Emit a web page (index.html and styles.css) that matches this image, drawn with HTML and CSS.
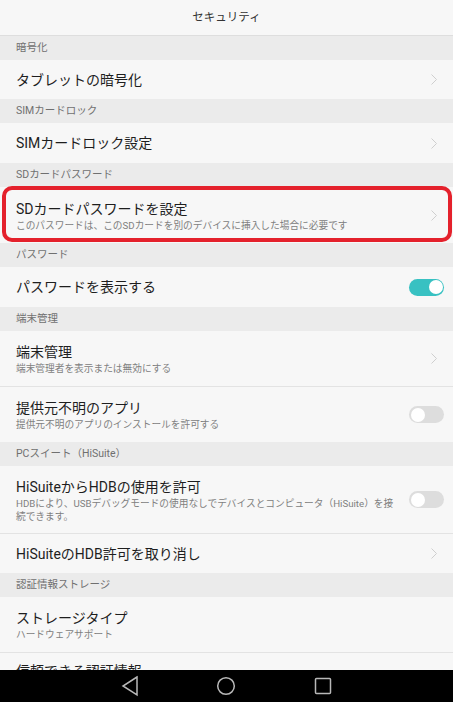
FILE: index.html
```html
<html>
<head>
    <meta charset="utf-8">
    <meta name="viewport" content="width=device-width,initial-scale=1">
    <title>セキュリティ</title>
    <link rel="stylesheet" href="styles.css">
</head>
<body>
<div class="screen">
    <div class="titlebar">セキュリティ</div>

    <div class="content">
        <div class="section">暗号化</div>
        <div class="item h40 first">
            <div class="text"><div class="title">タブレットの暗号化</div></div>
            <div class="trail"><svg class="chev" width="6" height="11" viewBox="0 0 6 11"><polyline points="0.5,0.5 5.5,5.5 0.5,10.5"/></svg></div>
        </div>

        <div class="section">SIMカードロック</div>
        <div class="item h40">
            <div class="text"><div class="title">SIMカードロック設定</div></div>
            <div class="trail"><svg class="chev" width="6" height="11" viewBox="0 0 6 11"><polyline points="0.5,0.5 5.5,5.5 0.5,10.5"/></svg></div>
        </div>

        <div class="section">SDカードパスワード</div>
        <div class="item h56 marked">
            <div class="text">
                <div class="title">SDカードパスワードを設定</div>
                <div class="sub">このパスワードは、このSDカードを別のデバイスに挿入した場合に必要です</div>
            </div>
            <div class="trail"><svg class="chev" width="6" height="11" viewBox="0 0 6 11"><polyline points="0.5,0.5 5.5,5.5 0.5,10.5"/></svg></div>
            <span class="highlight"></span>
        </div>

        <div class="section">パスワード</div>
        <div class="item h40">
            <div class="text"><div class="title">パスワードを表示する</div></div>
            <div class="trail"><span class="switch on"><span class="knob"></span></span></div>
        </div>

        <div class="section">端末管理</div>
        <div class="item h55">
            <div class="text">
                <div class="title">端末管理</div>
                <div class="sub">端末管理者を表示または無効にする</div>
            </div>
            <div class="trail"><svg class="chev" width="6" height="11" viewBox="0 0 6 11"><polyline points="0.5,0.5 5.5,5.5 0.5,10.5"/></svg></div>
        </div>
        <div class="item h56 divided">
            <div class="text">
                <div class="title">提供元不明のアプリ</div>
                <div class="sub">提供元不明のアプリのインストールを許可する</div>
            </div>
            <div class="trail"><span class="switch"><span class="knob"></span></span></div>
        </div>

        <div class="section">PCスイート（HiSuite）</div>
        <div class="item h67">
            <div class="text">
                <div class="title">HiSuiteからHDBの使用を許可</div>
                <div class="sub">HDBにより、USBデバッグモードの使用なしでデバイスとコンピュータ（HiSuite）を接続できます。</div>
            </div>
            <div class="trail"><span class="switch"><span class="knob"></span></span></div>
        </div>
        <div class="item h40 divided">
            <div class="text"><div class="title">HiSuiteのHDB許可を取り消し</div></div>
            <div class="trail"><svg class="chev" width="6" height="11" viewBox="0 0 6 11"><polyline points="0.5,0.5 5.5,5.5 0.5,10.5"/></svg></div>
        </div>

        <div class="section">認証情報ストレージ</div>
        <div class="item h55">
            <div class="text">
                <div class="title">ストレージタイプ</div>
                <div class="sub">ハードウェアサポート</div>
            </div>
        </div>
        <div class="item h55 divided top">
            <div class="text">
                <div class="title">信頼できる認証情報</div>
            </div>
        </div>
    </div>

    <div class="navbar">
        <svg width="18" height="22" viewBox="0 0 18 22"><polygon points="17,2 3,11 17,20"/></svg>
        <svg width="20" height="20" viewBox="0 0 20 20"><circle cx="10" cy="10" r="8.3"/></svg>
        <svg width="18" height="18" viewBox="0 0 18 18"><rect x="1.5" y="1.5" width="15" height="15" rx="1"/></svg>
    </div>
</div>
</body>
</html>
```

FILE: styles.css
```css
* {
    font-family: Roboto, "Noto Sans CJK JP", sans-serif;
    box-sizing: border-box;
}

body {
    margin: 0;
    padding: 0;
    background-color: #ffffff;
}

.screen {
    width: 453px;
    height: 702px;

    display: flex;
    flex-direction: column;

    background-color: #f7f7f7;
    overflow: hidden;
}

.titlebar {
    height: 36px;
    flex: none;

    border-bottom: 1px solid #dedede;

    line-height: 35px;
    text-align: center;
    font-size: 11.5px;
    color: #333333;
}

.content {
    flex: 1;
    overflow: hidden;
}

.section {
    height: 24px;

    padding-left: 16px;

    background-color: #ebebeb;

    line-height: 24px;
    font-size: 10.5px;
    color: #707070;
}

.item {
    position: relative;

    display: flex;
    align-items: center;

    padding: 0 9px 0 16px;

    background-color: #f7f7f7;
}

.item.divided {
    border-top: 1px solid #e3e3e3;
}

/* partly hidden last row: title sits where it would with a subtitle */
.item.top {
    align-items: flex-start;
    padding-top: 8px;
}

.h40 {
    height: 40px;
}

.first {
    height: 39px;
}

.h55 {
    height: 55px;
}

.h56 {
    height: 56px;
}

.h67 {
    height: 67px;
}

.text {
    flex: 1;
    min-width: 0;
    padding-right: 12px;
}

.title {
    font-size: 14px;
    line-height: 20px;
    color: #1e1e1e;
}

.sub {
    font-size: 9.7px;
    line-height: 13px;
    color: #808080;
}

.trail {
    width: 35px;
    flex: none;

    display: flex;
    justify-content: flex-end;
    align-items: center;
}

.chev {
    margin-right: 7px;

    fill: none;
    stroke: #cfcfcf;
    stroke-width: 1;
}

.switch {
    position: relative;

    width: 35px;
    height: 17px;

    border-radius: 9px;
    background-color: #dddddd;
}

.switch .knob {
    position: absolute;
    top: 1.5px;
    left: 1.5px;

    width: 14px;
    height: 14px;

    border-radius: 50%;
    background-color: #ffffff;
}

.switch.on {
    background-color: #38c1c2;
}

.switch.on .knob {
    left: auto;
    right: 1.5px;
}

/* red annotation box over the SD card row */
.highlight {
    position: absolute;
    top: -1px;
    left: 2px;
    right: 1px;
    bottom: 1px;

    border: 4px solid #e4212c;
    border-radius: 10px;
}

.navbar {
    height: 32px;
    flex: none;

    display: flex;
    align-items: center;
    justify-content: center;
    gap: 78px;

    padding-right: 2px;

    background-color: #000000;
}

.navbar svg {
    fill: none;
    stroke: #b8b8b8;
    stroke-width: 1.5;
}
```
